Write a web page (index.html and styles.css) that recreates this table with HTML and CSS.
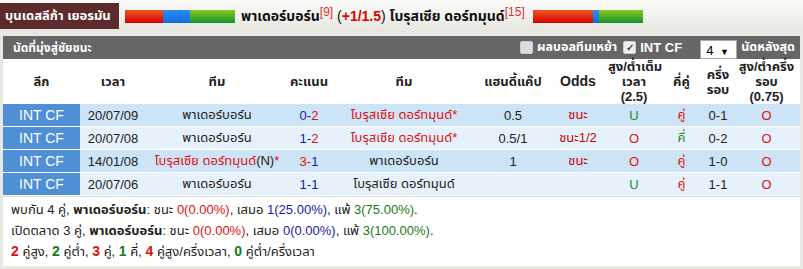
FILE: index.html
```html
<!DOCTYPE html>
<html lang="th">
<head>
<meta charset="utf-8">
<link rel="stylesheet" href="styles.css">
</head>
<body>
<div class="topbar">
  <div class="league">บุนเดสลีก้า เยอรมัน</div>
  <div class="bar bar1"><span class="r"></span><span class="b"></span><span class="g"></span></div>
  <div class="match">พาเดอร์บอร์น<sup>[9]</sup> <span class="hc">(<em>+1/1.5</em>)</span> โบรุสเซีย ดอร์ทมุนด์<sup>[15]</sup></div>
  <div class="bar bar2"><span class="r"></span><span class="b"></span><span class="g"></span></div>
</div>
<div class="panel">
  <div class="titlebar">
    <div class="title">นัดที่มุ่งสู่ชัยชนะ</div>
    <div class="controls">
      <span class="cb"></span><span class="lbl">ผลบอลทีมเหย้า</span>
      <span class="cb on">✓</span><span class="lat">INT CF</span>
      <span class="sel">4 <i>▼</i></span><span class="lbl">นัดหลังสุด</span>
    </div>
  </div>
  <table class="grid">
    <colgroup>
      <col class="c1"><col class="c2"><col class="c3"><col class="c4"><col class="c5"><col class="c6"><col class="c7"><col class="c8"><col class="c9"><col class="c10"><col class="c11">
    </colgroup>
    <thead>
      <tr>
        <th>ลีก</th><th>เวลา</th><th>ทีม</th><th>คะแนน</th><th>ทีม</th><th>แฮนดี้แค๊ป</th><th class="odds">Odds</th>
        <th>สูง/ต่ำเต็ม<br>เวลา<br>(2.5)</th><th>คี่คู่</th><th>ครึ่ง<br>รอบ</th><th>สูง/ต่ำครึ่ง<br>รอบ<br>(0.75)</th>
      </tr>
    </thead>
    <tbody>
      <tr class="odd">
        <td class="lg">INT CF</td><td>20/07/09</td><td>พาเดอร์บอร์น</td><td><span class="bl">0-</span><span class="rd">2</span></td><td class="rd">โบรุสเซีย ดอร์ทมุนด์*</td><td>0.5</td><td class="dr">ชนะ</td><td class="gr">U</td><td class="rd">คู่</td><td>0-1</td><td class="rd">O</td>
      </tr>
      <tr class="even">
        <td class="lg">INT CF</td><td>20/07/08</td><td>พาเดอร์บอร์น</td><td><span class="bl">1-</span><span class="rd">2</span></td><td class="rd">โบรุสเซีย ดอร์ทมุนด์*</td><td>0.5/1</td><td class="dr">ชนะ1/2</td><td class="rd">O</td><td class="gr">คี่</td><td>0-2</td><td class="rd">O</td>
      </tr>
      <tr class="odd">
        <td class="lg">INT CF</td><td>14/01/08</td><td><span class="rd">โบรุสเซีย ดอร์ทมุนด์</span>(N)<span class="rd">*</span></td><td><span class="rd">3-</span><span class="bl">1</span></td><td>พาเดอร์บอร์น</td><td>1</td><td class="dr">ชนะ</td><td class="rd">O</td><td class="rd">คู่</td><td>1-0</td><td class="rd">O</td>
      </tr>
      <tr class="even">
        <td class="lg">INT CF</td><td>20/07/06</td><td>พาเดอร์บอร์น</td><td class="bl">1-1</td><td>โบรุสเซีย ดอร์ทมุนด์</td><td></td><td></td><td class="gr">U</td><td class="rd">คู่</td><td>1-1</td><td class="rd">O</td>
      </tr>
    </tbody>
  </table>
  <div class="summary">
    <p>พบกัน 4 คู่, <b>พาเดอร์บอร์น</b>: ชนะ <span class="rd">0(0.00%)</span>, เสมอ <span class="bl">1(25.00%)</span>, แพ้ <span class="gn">3(75.00%)</span>.</p>
    <p>เปิดตลาด 3 คู่, <b>พาเดอร์บอร์น</b>: ชนะ <span class="rd">0(0.00%)</span>, เสมอ <span class="bl">0(0.00%)</span>, แพ้ <span class="gn">3(100.00%)</span>.</p>
    <p><b class="rd n">2</b> คู่สูง, <b class="gn n">2</b> คู่ต่ำ, <b class="rd n">3</b> คู่, <b class="gn n">1</b> คี่, <b class="rd n">4</b> คู่สูง/ครึ่งเวลา, <b class="gn n">0</b> คู่ต่ำ/ครึ่งเวลา</p>
  </div>
</div>
</body>
</html>
```
FILE: styles.css
```css
html, body {
  margin: 0;
  padding: 0;
}
body {
  background: #e9e9e4;
  font-family: "Liberation Sans", Tahoma, "Noto Sans Thai", sans-serif;
  font-size: 13px;
  color: #222;
  width: 803px;
  height: 269px;
  overflow: hidden;
}
.topbar {
  height: 32px;
  display: flex;
  align-items: center;
  background: linear-gradient(#fbfbfa, #e7e7e0);
}
.league {
  background: #5d2b2b;
  color: #fff;
  font-weight: bold;
  font-size: 13px;
  height: 26px;
  line-height: 26px;
  width: 119px;
  padding-left: 5px;
  box-sizing: border-box;
  white-space: nowrap;
  overflow: hidden;
}
.bar {
  display: flex;
  height: 13px;
  width: 110px;
}
.bar1 { margin-left: 6px; }
.bar2 { margin-left: 8px; }
.bar span { display: block; height: 100%; }
.bar .r { background: linear-gradient(#f2571f, #d40000); }
.bar .b { background: linear-gradient(#2b8cf5, #0f6ee0); }
.bar .g { background: linear-gradient(#8cc820, #12952f); }
.bar1 .r { width: 38px; }
.bar1 .b { width: 27px; }
.bar1 .g { width: 45px; }
.bar2 .r { width: 60px; }
.bar2 .b { width: 6px; }
.bar2 .g { width: 44px; }
.match {
  margin-left: 6px;
  font-weight: bold;
  font-size: 14px;
  color: #111;
  white-space: nowrap;
}
.match sup {
  color: #e03030;
  font-weight: normal;
  font-size: 12px;
  vertical-align: 5px;
  line-height: 0;
}
.hc { font-weight: normal; }
.hc em { font-style: normal; font-weight: bold; color: #e00000; }
.panel {
  margin: 4px 3px 0;
  background: #fff;
}
.titlebar {
  height: 23px;
  background: #666;
  color: #fff;
  font-weight: bold;
  font-size: 12px;
  display: flex;
  align-items: center;
  justify-content: space-between;
  padding: 0 5px 0 10px;
}
.controls {
  display: flex;
  align-items: center;
  gap: 4px;
  height: 100%;
}
.lbl { font-size: 12.5px; }
.cb {
  width: 11px;
  height: 11px;
  background: #ddd;
  border: 1px solid #ccc;
  border-radius: 2px;
  font-size: 10px;
  line-height: 11px;
  text-align: center;
  color: #444;
  margin-left: 2px;
}
.cb.on { background: #eee; }
.lat { font-family: "Liberation Sans", sans-serif; font-size: 13px; }
.sel {
  margin-left: 14px;
  background: #fff;
  color: #000;
  font-weight: normal;
  font-size: 13px;
  height: 19px;
  line-height: 19px;
  width: 37px;
  box-sizing: border-box;
  border: 1px solid #aaa;
  padding-left: 5px;
  align-self: flex-end;
}
.sel i { font-style: normal; font-size: 9px; margin-left: 3px; }
.grid {
  width: 797px;
  table-layout: fixed;
  border-collapse: collapse;
}
.c1 { width: 77px; }
.c2 { width: 66px; }
.c3 { width: 142px; }
.c4 { width: 42px; }
.c5 { width: 148px; }
.c6 { width: 70px; }
.c7 { width: 60px; }
.c8 { width: 52px; }
.c9 { width: 43px; }
.c10 { width: 30px; }
.c11 { width: 67px; }
.grid th {
  height: 45px;
  padding: 0;
  font-size: 13px;
  font-weight: bold;
  line-height: 15px;
  color: #222;
  white-space: nowrap;
  text-align: center;
}
.grid th.odds { font-size: 14px; }
.grid td {
  height: 22px;
  padding: 0;
  border-bottom: 1px solid #fff;
  text-align: center;
  white-space: nowrap;
  color: #222;
}
.grid tr.odd td { background: #cde4f7; }
.grid tr.even td { background: #e6f2fb; }
.grid tr td.lg {
  background: #4f8fd6;
  color: #fff;
  font-size: 14px;
}
.rd { color: #e01010 !important; }
.dr { color: #cc0000 !important; }
.bl { color: #1a1aa8 !important; }
.gr { color: #2b8a2b !important; }
.gn { color: #1a7a1a; }
.summary {
  border-top: 1px solid #ddd;
  padding: 2px 8px 4px;
}
.summary p {
  margin: 0;
  height: 21px;
  line-height: 21px;
  white-space: nowrap;
}
.summary .n { font-size: 14px; }
```
